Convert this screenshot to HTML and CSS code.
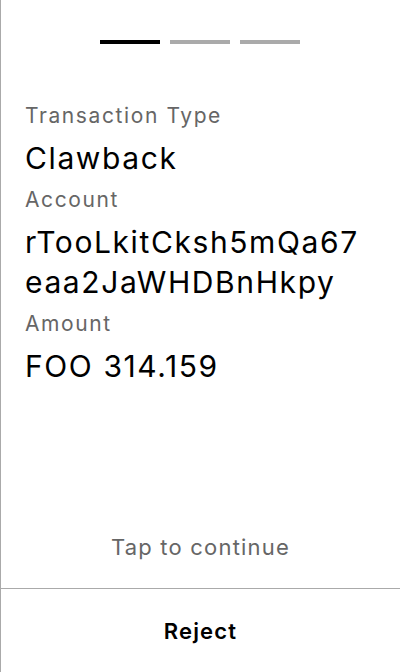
FILE: index.html
```html
<!DOCTYPE html>
<html>
<head>
<meta charset="utf-8">
<link rel="stylesheet" href="styles.css">
</head>
<body>
<div class="screen">
  <div class="pager">
    <span class="dot active"></span>
    <span class="dot"></span>
    <span class="dot"></span>
  </div>
  <div class="fields">
    <div class="label">Transaction Type</div>
    <div class="value">Clawback</div>
    <div class="label">Account</div>
    <div class="value">rTooLkitCksh5mQa67<br>eaa2JaWHDBnHkpy</div>
    <div class="label">Amount</div>
    <div class="value">FOO 314.159</div>
  </div>
  <div class="tap">Tap to continue</div>
  <div class="footer">Reject</div>
</div>
</body>
</html>
```

FILE: styles.css
```css
html, body {
  margin: 0;
  padding: 0;
  background: #fff;
}
body {
  font-family: Inter, "Noto Sans", sans-serif;
  color: #000;
}
.screen {
  width: 399px;
  height: 672px;
  border-left: 1px solid #aaa;
  display: flex;
  flex-direction: column;
}
.pager {
  display: flex;
  justify-content: center;
  gap: 10px;
  padding-top: 40px;
  margin-left: -1px;
}
.dot {
  width: 60px;
  height: 4px;
  background: #aaa;
}
.dot.active {
  background: #000;
}
.fields {
  padding: 50px 20px 0 24px;
}
.label {
  font-size: 21px;
  line-height: 44px;
  letter-spacing: 1.6px;
  color: #666;
}
.value {
  font-size: 30px;
  line-height: 40px;
  letter-spacing: 1.6px;
}
.tap {
  margin-top: auto;
  text-align: center;
  font-size: 22px;
  line-height: 40px;
  letter-spacing: 1.2px;
  color: #666;
  padding-bottom: 21px;
}
.footer {
  border-top: 1px solid #aaa;
  height: 83px;
  display: flex;
  align-items: center;
  justify-content: center;
  font-size: 22px;
  font-weight: 600;
  letter-spacing: 1.2px;
}
```
